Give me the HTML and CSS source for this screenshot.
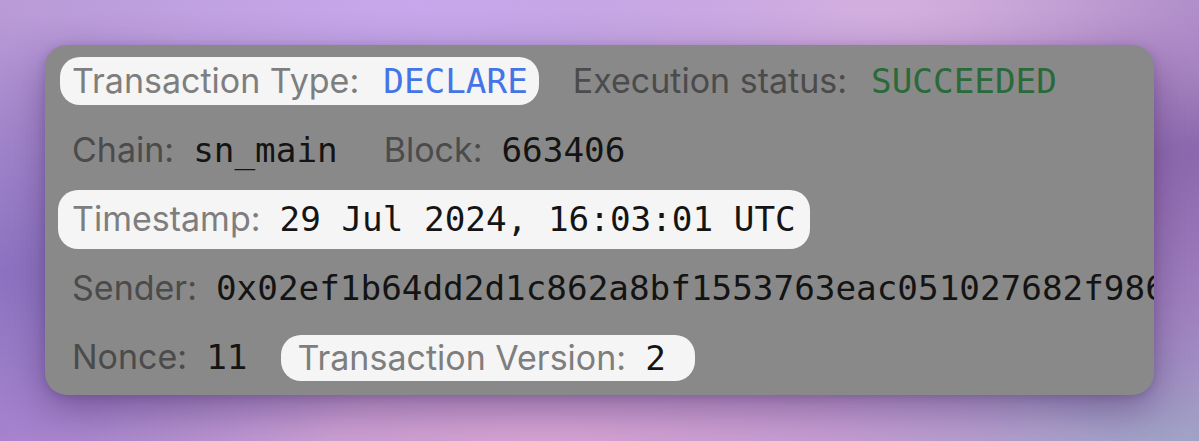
FILE: index.html
```html
<!DOCTYPE html>
<html lang="en">
<head>
<meta charset="utf-8">
<title>Transaction details</title>
<link rel="stylesheet" href="styles.css">
</head>
<body>
<div class="card">
  <div class="row">
    <div class="field field-wide pill pill-type"><span class="label">Transaction Type:</span><span class="value value-blue">DECLARE</span></div>
    <div class="field field-wide"><span class="label">Execution status:</span><span class="value value-green">SUCCEEDED</span></div>
  </div>
  <div class="row">
    <div class="field"><span class="label">Chain:</span><span class="value">sn_main</span></div>
    <div class="field"><span class="label">Block:</span><span class="value">663406</span></div>
  </div>
  <div class="row">
    <div class="field pill pill-time"><span class="label">Timestamp:</span><span class="value">29 Jul 2024, 16:03:01 UTC</span></div>
  </div>
  <div class="row">
    <div class="field"><span class="label">Sender:</span><span class="value">0x02ef1b64dd2d1c862a8bf1553763eac051027682f986</span></div>
  </div>
  <div class="row">
    <div class="field"><span class="label">Nonce:</span><span class="value">11</span></div>
    <div class="field pill pill-version"><span class="label">Transaction Version:</span><span class="value">2</span></div>
  </div>
</div>
</body>
</html>
```

FILE: styles.css
```css
html, body {
  margin: 0;
  padding: 0;
}

body {
  width: 1199px;
  height: 441px;
  overflow: hidden;
  font-family: "Inter", "Noto Sans", sans-serif;
  background:
    radial-gradient(ellipse 420px 260px at 0% 62%, #8c72c2 0%, rgba(140,114,194,0) 100%),
    radial-gradient(ellipse 520px 200px at 35% 0%, #c8a8ec 0%, rgba(200,168,236,0) 100%),
    radial-gradient(ellipse 480px 180px at 72% 2%, #d5b0de 0%, rgba(213,176,222,0) 100%),
    radial-gradient(ellipse 320px 300px at 100% 35%, #8d68ae 0%, rgba(141,104,174,0) 100%),
    radial-gradient(ellipse 560px 140px at 45% 100%, #d8a4d4 0%, rgba(216,164,212,0) 100%),
    radial-gradient(ellipse 360px 160px at 100% 100%, #a0a6c6 0%, rgba(160,166,198,0) 100%),
    radial-gradient(ellipse 260px 150px at 0% 100%, #b48ad4 0%, rgba(180,138,212,0) 100%),
    #b597d2;
}

.card {
  box-sizing: border-box;
  width: 1109px;
  height: 350px;
  margin: 45px 0 0 45px;
  padding: 12px 15px 14px;
  background: #898989;
  border-radius: 22px;
  overflow: hidden;
  box-shadow: 0 14px 40px rgba(60, 34, 92, 0.45), 0 2px 8px rgba(60, 34, 92, 0.2);
  display: flex;
  flex-direction: column;
  gap: 21px;
}

.row {
  display: flex;
  align-items: center;
  gap: 22px;
  height: 48px;
  white-space: nowrap;
}

.field {
  display: flex;
  align-items: baseline;
  gap: 19px;
  padding: 0 12px;
  font-size: 34px;
  line-height: 48px;
  flex-shrink: 0;
}

.field-wide {
  gap: 24px;
}

.label {
  color: #4b4b4b;
}

.value {
  font-family: "DejaVu Sans Mono", "Liberation Mono", monospace;
  font-size: 34.3px;
  color: #141414;
}

.value-blue {
  color: #4474e6;
}

.value-green {
  color: #2a6a3a;
}

.pill {
  background: #f5f5f5;
  border-radius: 20px;
}

.pill .label {
  color: #7e7e7e;
}

.pill-type {
  padding: 0 11px 0 12px;
}

.pill-time {
  padding: 5px 14px 6px 14px;
  margin: -5px -2px -6px;
}

.pill-version {
  line-height: 46px;
  padding: 0 29px 0 16px;
  margin-top: 2px;
}
```
